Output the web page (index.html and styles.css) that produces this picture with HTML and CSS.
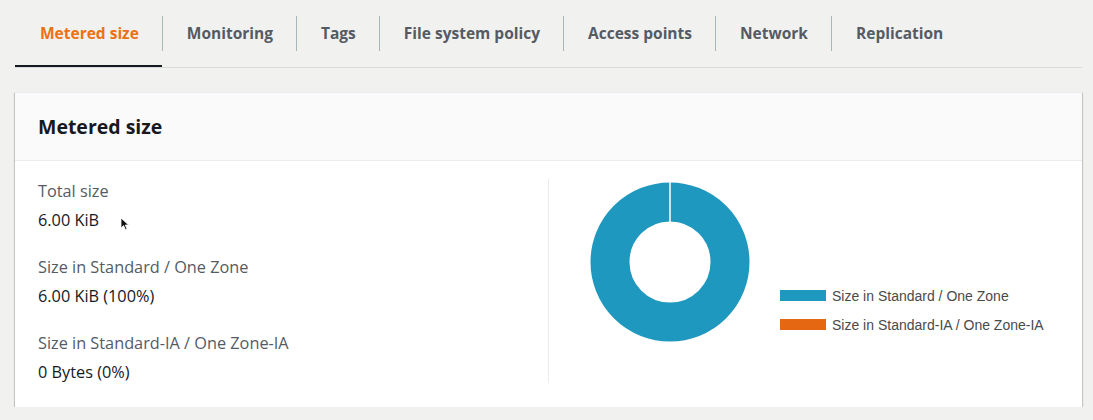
FILE: index.html
```html
<!DOCTYPE html>
<html>
<head>
<meta charset="utf-8">
<link rel="stylesheet" href="styles.css">
</head>
<body>
<div class="page">
  <div class="tabs">
    <div class="tab active"><span>Metered size</span></div>
    <div class="tab"><span>Monitoring</span></div>
    <div class="tab"><span>Tags</span></div>
    <div class="tab"><span>File system policy</span></div>
    <div class="tab"><span>Access points</span></div>
    <div class="tab"><span>Network</span></div>
    <div class="tab"><span>Replication</span></div>
  </div>
  <div class="card">
    <div class="card-header">Metered size</div>
    <div class="card-body">
      <div class="stats">
        <div class="stat">
          <div class="stat-label">Total size</div>
          <div class="stat-value">6.00 KiB</div>
        </div>
        <div class="stat">
          <div class="stat-label">Size in Standard / One Zone</div>
          <div class="stat-value">6.00 KiB (100%)</div>
        </div>
        <div class="stat">
          <div class="stat-label">Size in Standard-IA / One Zone-IA</div>
          <div class="stat-value">0 Bytes (0%)</div>
        </div>
        <svg class="cursor" width="10" height="14" viewBox="0 0 10 14">
          <path d="M1 1 L1 11 L3.6 8.6 L5.4 12.6 L7 11.9 L5.3 8 L8.6 8 Z" fill="#111" stroke="#fff" stroke-width="0.8"/>
        </svg>
      </div>
      <div class="chart">
        <svg class="donut" width="160" height="160" viewBox="0 0 160 160">
          <circle cx="80" cy="80" r="60" fill="none" stroke="#1f98c0" stroke-width="39"/>
          <line x1="80" y1="0" x2="80" y2="41" stroke="#ffffff" stroke-width="1.5"/>
        </svg>
        <div class="legend">
          <div class="legend-row"><span class="swatch blue"></span>Size in Standard / One Zone</div>
          <div class="legend-row"><span class="swatch orange"></span>Size in Standard-IA / One Zone-IA</div>
        </div>
      </div>
    </div>
  </div>
</div>
</body>
</html>
```
FILE: styles.css
```css
html, body {
  margin: 0;
  padding: 0;
  background: #f1f1ef;
}
body {
  font-family: "Open Sans", "Noto Sans", sans-serif;
  color: #16191f;
}
.page {
  padding: 0 11px 0 15px;
}
.tabs {
  display: flex;
  border-bottom: 1px solid #d5dbdb;
}
.tab {
  padding: 16px 0 14px;
  border-bottom: 2px solid transparent;
  font-weight: 700;
  font-size: 15.5px;
  color: #545b64;
}
.tab span {
  display: block;
  line-height: 35px;
  padding: 0 23px 0 24px;
  border-left: 1px solid #aab7b8;
}
.tab:first-child span {
  border-left: none;
  padding-left: 25px;
}
.tab.active {
  color: #ec7211;
  border-bottom-color: #16191f;
}
.card {
  margin-top: 24px;
  background: #ffffff;
  box-shadow: 0 1px 1px 0 rgba(0, 28, 36, 0.3), 1px 1px 1px 0 rgba(0, 28, 36, 0.15), -1px 1px 1px 0 rgba(0, 28, 36, 0.15);
  border-top: 1px solid #eaeded;
}
.card-header {
  background: #fafafa;
  border-bottom: 1px solid #eaeded;
  height: 67px;
  line-height: 67px;
  padding: 0 23px;
  font-size: 19.5px;
  font-weight: 700;
}
.card-body {
  display: flex;
  padding: 18px 0 24px;
}
.stats {
  position: relative;
  width: 510px;
  padding: 1px 0 0 23px;
  border-right: 1px solid #eaeded;
}
.stat {
  margin-bottom: 25px;
}
.stat:last-of-type {
  margin-bottom: 0;
}
.stat-label {
  font-size: 16.3px;
  line-height: 22px;
  color: #545b64;
}
.stat-value {
  margin-top: 7px;
  font-size: 16.3px;
  line-height: 22px;
  color: #16191f;
}
.cursor {
  position: absolute;
  left: 105px;
  top: 38px;
}
.chart {
  display: flex;
  align-items: flex-start;
  padding: 3px 0 0 41px;
}
.legend {
  margin: 99px 0 0 30px;
  font-family: "Liberation Sans", Arial, sans-serif;
  font-size: 14px;
  color: #4a4a4a;
}
.legend-row {
  display: flex;
  align-items: center;
  height: 29px;
  line-height: 20px;
}
.swatch {
  display: inline-block;
  width: 46px;
  height: 11px;
  margin-right: 6px;
}
.swatch.blue {
  background: #1f98c0;
}
.swatch.orange {
  background: #e66711;
}
```
